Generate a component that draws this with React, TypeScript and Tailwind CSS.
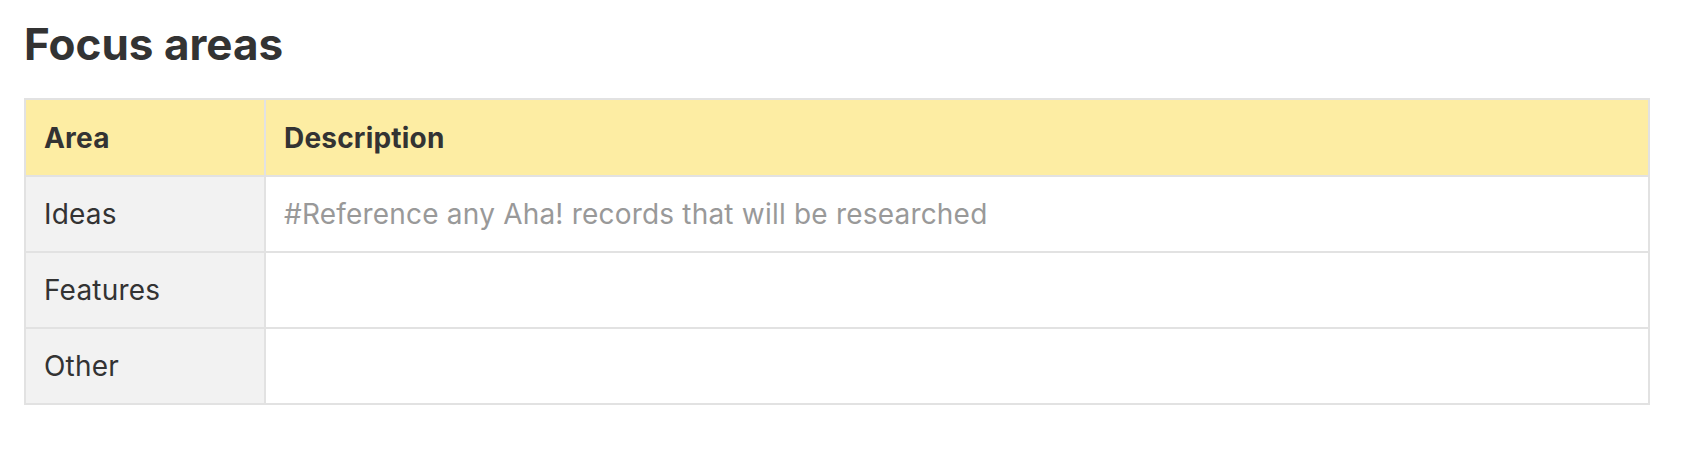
import React from 'react';

const rows = [
  { area: 'Ideas', description: '#Reference any Aha! records that will be researched' },
  { area: 'Features', description: '' },
  { area: 'Other', description: '' },
];

const App = () => {
  return (
    <div className="bg-white min-h-screen pl-6 pr-12 pt-[18px] text-[#333333]" style={{ fontFamily: 'Inter, "Noto Sans", sans-serif' }}>
      <h1 className="text-[44px] leading-[53px] font-bold">Focus areas</h1>

      {/* Table */}
      <table className="mt-[27px] w-full border-collapse border-2 border-[#e2e2e2] text-[28px] tracking-[0.2px]">
        <thead>
          <tr className="bg-[#fdeda3]">
            <th className="w-[240px] border-2 border-[#e2e2e2] px-[18px] h-[77px] text-left font-bold">Area</th>
            <th className="border-2 border-[#e2e2e2] px-[18px] text-left font-bold">Description</th>
          </tr>
        </thead>
        <tbody>
          {rows.map(row => (
            <tr key={row.area}>
              <td className="bg-[#f2f2f2] border-2 border-[#e2e2e2] px-[18px] h-[76px]">{row.area}</td>
              <td className="bg-white border-2 border-[#e2e2e2] px-[18px] text-[#999999]">{row.description}</td>
            </tr>
          ))}
        </tbody>
      </table>
    </div>
  );
};

export default App;
